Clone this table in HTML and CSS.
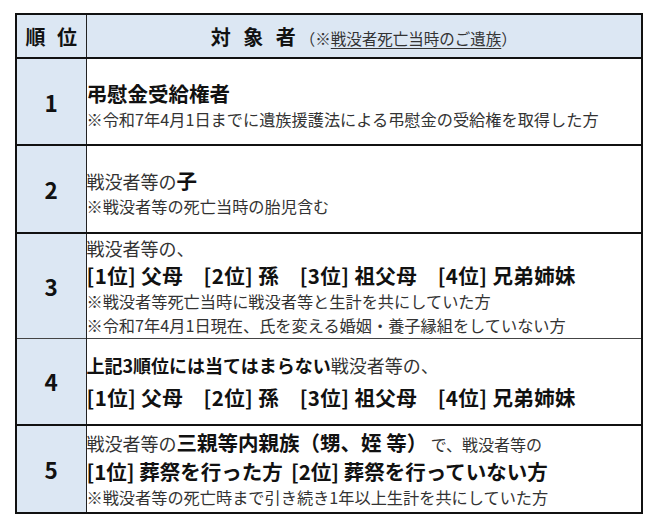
FILE: index.html
```html
<!DOCTYPE html>
<html lang="ja">
<head>
<meta charset="utf-8">
<link rel="stylesheet" href="styles.css">
</head>
<body>
<table class="tbl">
  <colgroup><col class="c-rank"><col class="c-target"></colgroup>
  <thead>
    <tr class="r-head">
      <th class="rank-h">順 位</th>
      <th class="target-h"><span class="th-main">対 象 者</span><span class="th-sub">（※<u>戦没者死亡当時のご遺族</u>）</span></th>
    </tr>
  </thead>
  <tbody>
    <tr class="r1 thick">
      <td class="rank">1</td>
      <td class="body">
        <div class="ln big b">弔慰金受給権者</div>
        <div class="ln note">※令和7年4月1日までに遺族援護法による弔慰金の受給権を取得した方</div>
      </td>
    </tr>
    <tr class="r2 thick">
      <td class="rank">2</td>
      <td class="body">
        <div class="ln mid">戦没者等の<b class="bb">子</b></div>
        <div class="ln note">※戦没者等の死亡当時の胎児含む</div>
      </td>
    </tr>
    <tr class="r3 thin">
      <td class="rank">3</td>
      <td class="body">
        <div class="ln mid">戦没者等の、</div>
        <div class="ln big b wide">[1位] 父母<span class="gap"></span>[2位] 孫<span class="gap"></span>[3位] 祖父母<span class="gap"></span>[4位] 兄弟姉妹</div>
        <div class="ln note">※戦没者等死亡当時に戦没者等と生計を共にしていた方</div>
        <div class="ln note">※令和7年4月1日現在、氏を変える婚姻・養子縁組をしていない方</div>
      </td>
    </tr>
    <tr class="r4 thick">
      <td class="rank">4</td>
      <td class="body">
        <div class="ln mid"><b>上記3順位には当てはまらない</b>戦没者等の、</div>
        <div class="ln big b wide spaced">[1位] 父母<span class="gap"></span>[2位] 孫<span class="gap"></span>[3位] 祖父母<span class="gap"></span>[4位] 兄弟姉妹</div>
      </td>
    </tr>
    <tr class="r5 thick">
      <td class="rank">5</td>
      <td class="body">
        <div class="ln mid">戦没者等の<b class="bb">三親等内親族（甥、姪 等）</b><span class="sm"> で、戦没者等の</span></div>
        <div class="ln big b">[1位] 葬祭を行った方<span class="gap-s"></span>[2位] 葬祭を行っていない方</div>
        <div class="ln note">※戦没者等の死亡時まで引き続き1年以上生計を共にしていた方</div>
      </td>
    </tr>
  </tbody>
</table>
</body>
</html>
```

FILE: styles.css
```css
html, body {
  margin: 0;
  padding: 0;
  background: #ffffff;
}
body {
  font-family: "Noto Sans CJK JP", "Noto Sans", sans-serif;
  color: #1a1a1a;
}
.tbl {
  margin: 13px 0 0 15px;
  width: 628px;
  border-collapse: collapse;
  border: 2px solid #111;
  table-layout: fixed;
}
.c-rank { width: 70px; }
.tbl th, .tbl td {
  padding: 0;
  border-left: 1.5px solid #222;
  border-right: 1.5px solid #222;
}
.r-head {
  height: 44px;
  background: #dce7f3;
  border-bottom: 2px solid #111;
}
.rank-h {
  font-size: 20px;
  font-weight: 700;
  text-align: center;
  letter-spacing: 3.5px;
  text-indent: 3.5px;
  color: #111;
}
.target-h {
  text-align: center;
  font-weight: 700;
  color: #111;
}
.th-main {
  font-size: 20px;
  letter-spacing: 4px;
}
.th-sub {
  font-size: 15.5px;
  font-weight: 400;
  color: #333;
}
.th-sub u {
  text-underline-offset: 3px;
}
.thick { border-bottom: 2px solid #111; }
.thin { border-bottom: 1px solid #444; }
.r1 { height: 87px; }
.r2 { height: 88px; }
.r3 { height: 105px; }
.r4 { height: 87px; }
.r5 { height: 88px; }
.rank {
  background: #dce7f3;
  text-align: center;
  vertical-align: middle;
  font-size: 22.5px;
  font-weight: 700;
  color: #111;
  padding-top: 2px;
}
.body {
  vertical-align: middle;
  padding-left: 3px;
}
.r1 .body, .r2 .body { padding-top: 6px; }
.ln {
  white-space: nowrap;
}
.big {
  font-size: 20.5px;
  line-height: 28px;
  color: #111;
}
.wide { letter-spacing: 0.4px; }
.spaced { margin-top: 5px; }
.b { font-weight: 700; }
.gap {
  display: inline-block;
  width: 1em;
}
.gap-s {
  display: inline-block;
  width: 0.4em;
}
.mid {
  font-size: 18px;
  line-height: 26px;
  color: #333;
}
.mid b {
  font-weight: 700;
  color: #111;
}
.mid .bb {
  font-size: 20.5px;
}
.sm {
  font-size: 16px;
}
.note {
  font-size: 16.2px;
  line-height: 24px;
  color: #333;
}
```
